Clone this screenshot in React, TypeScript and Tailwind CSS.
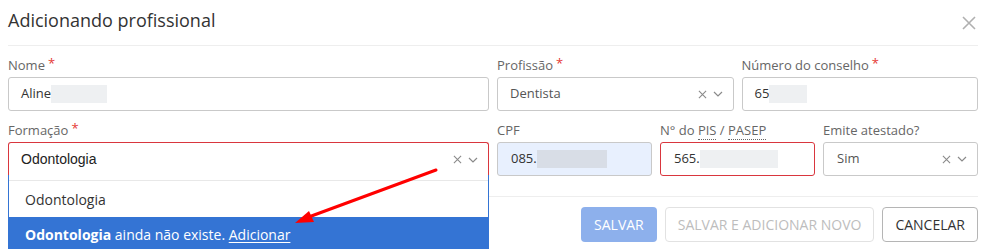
import React from "react";

const font = { fontFamily: '"Open Sans", "Noto Sans", sans-serif' };

function Label({ text, required, dotted }: { text: React.ReactNode; required?: boolean; dotted?: boolean }) {
  return (
    <div className="h-[18px] mb-[3px] text-[13px] leading-[18px] text-[#666] flex items-start">
      <span>{text}</span>
      {required && <span className="text-[#e53935] text-[13px] leading-[14px] ml-[3px]">*</span>}
    </div>
  );
}

function Blur({ w, tone = "bg-[#eef0f2]" }: { w: number; tone?: string }) {
  return <span className={`inline-block h-[18px] align-middle ${tone}`} style={{ width: w }} />;
}

function SelectIcons() {
  return (
    <div className="flex items-center gap-[6px] text-[#8a8a8a]">
      <svg width="9" height="9" viewBox="0 0 10 10" fill="none" stroke="currentColor" strokeWidth="1.2">
        <path d="M1 1l8 8M9 1l-8 8" />
      </svg>
      <svg width="10" height="6" viewBox="0 0 10 6" fill="none" stroke="currentColor" strokeWidth="1.2">
        <path d="M1 1l4 4 4-4" />
      </svg>
    </div>
  );
}

export default function App() {
  return (
    <div className="bg-white w-[988px] h-[249px] overflow-hidden relative text-[#333]" style={font}>
      <div className="pl-2 pr-[10px]">
        <div className="flex items-start justify-between h-[46px] border-b border-[#eeeeee] pt-[8px]">
          <h1 className="text-[18px] leading-[24px] text-[#333]">Adicionando profissional</h1>
          <svg className="mt-[7px] mr-[1px]" width="16" height="16" viewBox="0 0 16 16" fill="none" stroke="#b0b0b0" strokeWidth="1.6">
            <path d="M2 2l12 12M14 2L2 14" />
          </svg>
        </div>

        <div className="grid grid-cols-12 gap-x-2 gap-y-[10px] pt-[10px]">
          <div className="col-span-6">
            <Label text="Nome" required />
            <div className="h-[34px] border border-[#c9c9c9] rounded-[3px] flex items-center pl-[12px] text-[13px] text-[#333]">
              <span>Aline</span>
              <Blur w={56} />
            </div>
          </div>
          <div className="col-span-3">
            <Label text="Profissão" required />
            <div className="h-[34px] border border-[#c9c9c9] rounded-[3px] flex items-center justify-between pl-[12px] pr-[10px] text-[13px] text-[#555]">
              <span>Dentista</span>
              <SelectIcons />
            </div>
          </div>
          <div className="col-span-3">
            <Label text="Número do conselho" required />
            <div className="h-[34px] border border-[#c9c9c9] rounded-[3px] flex items-center pl-[12px] text-[13px] text-[#333]">
              <span>65</span>
              <Blur w={38} />
            </div>
          </div>

          <div className="col-span-6">
            <Label text="Formação" required />
            <div className="h-[34px] border border-[#d9363e] border-b-0 rounded-t-[3px] flex items-center justify-between pl-[12px] pr-[10px]">
              <span className="text-[14px] text-[#222]" style={{ fontFamily: '"Liberation Sans", Arial, sans-serif' }}>
                Odontologia
              </span>
              <SelectIcons />
            </div>
          </div>
          <div className="col-span-2">
            <Label text="CPF" />
            <div className="h-[34px] border border-[#c9c9c9] rounded-[3px] bg-[#e8f0fe] flex items-center pl-[13px] text-[13px] text-[#333]">
              <span>085.</span>
              <Blur w={70} tone="bg-[#d8dde6]" />
            </div>
          </div>
          <div className="col-span-2">
            <Label
              text={
                <>
                  N° do <span className="border-b border-dotted border-[#666]">PIS</span> /{" "}
                  <span className="border-b border-dotted border-[#666]">PASEP</span>
                </>
              }
            />
            <div className="h-[34px] border border-[#d9363e] rounded-[3px] flex items-center pl-[13px] text-[13px] text-[#333]">
              <span>565.</span>
              <Blur w={78} />
            </div>
          </div>
          <div className="col-span-2">
            <Label text="Emite atestado?" />
            <div className="h-[34px] border border-[#c9c9c9] rounded-[3px] flex items-center justify-between pl-[13px] pr-[10px] text-[13px] text-[#555]">
              <span>Sim</span>
              <SelectIcons />
            </div>
          </div>
        </div>

        <div className="mt-[20px] border-t border-[#eeeeee] pt-[10px] flex justify-end gap-2 text-[14px]">
          <button className="h-[35px] px-[13px] rounded-[4px] bg-[#8db0ec] text-white">SALVAR</button>
          <button className="h-[35px] px-[12px] rounded-[4px] border border-[#e2e2e2] text-[#bdbdbd] bg-white">
            SALVAR E ADICIONAR NOVO
          </button>
          <button className="h-[35px] px-[12px] rounded-[4px] border border-[#b5b5b5] text-[#333] bg-white">
            CANCELAR
          </button>
        </div>
      </div>

      {/* dropdown menu overlay */}
      <div className="absolute left-2 top-[175px] w-[481px] border-x border-[#3474d4] bg-white">
        <div className="h-[5px]" />
        <div className="border-t border-[#e8e8e8] h-[37px] flex items-center pl-[16px] text-[14px] text-[#333]">
          Odontologia
        </div>
        <div className="h-[34px] bg-[#3474d4] flex items-center pl-[16px] text-[14px] text-white">
          <b className="font-bold">Odontologia</b>
          <span>&nbsp;ainda não existe.&nbsp;</span>
          <span className="underline underline-offset-2">Adicionar</span>
        </div>
      </div>

      {/* annotation arrow */}
      <svg className="absolute left-0 top-0 pointer-events-none" width="988" height="249">
        <line x1="436" y1="170" x2="306" y2="218" stroke="#ff0000" strokeWidth="3" strokeLinecap="round" />
        <polygon points="295,223 309,211 314,222" fill="#ff0000" />
      </svg>
    </div>
  );
}
